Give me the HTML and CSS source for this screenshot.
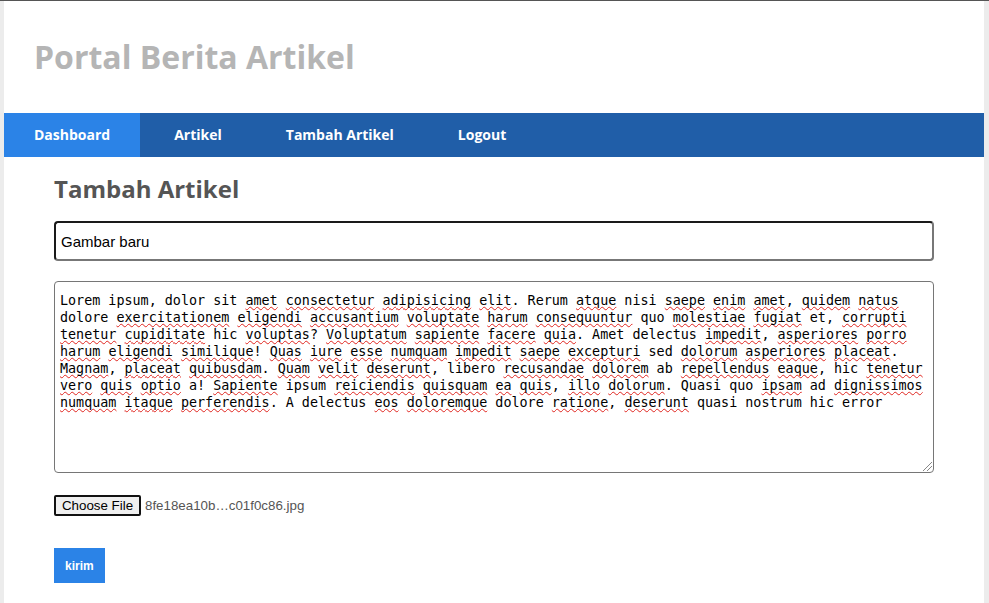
FILE: index.html
```html
<!DOCTYPE html>
<html lang="id">
<head>
<meta charset="utf-8">
<title>Portal Berita Artikel</title>
<link rel="stylesheet" href="styles.css">
</head>
<body>
<div class="container">
  <header class="site-header">
    <h1 class="site-title">Portal Berita Artikel</h1>
  </header>
  <nav class="main-nav">
    <a class="nav-item active" href="#">Dashboard</a>
    <a class="nav-item" href="#">Artikel</a>
    <a class="nav-item" href="#">Tambah Artikel</a>
    <a class="nav-item" href="#">Logout</a>
  </nav>
  <main class="content">
    <h2 class="page-title">Tambah Artikel</h2>
    <form class="article-form">
      <input class="field-title" type="text" value="Gambar baru">
      <div class="field-body" role="textbox" aria-multiline="true">Lorem ipsum, dolor sit <span class="sp">amet</span> <span class="sp">consectetur</span> <span class="sp">adipisicing</span> <span class="sp">elit</span>. Rerum <span class="sp">atque</span> nisi <span class="sp">saepe</span> <span class="sp">enim</span> <span class="sp">amet</span>, <span class="sp">quidem</span> <span class="sp">natus</span><br>dolore <span class="sp">exercitationem</span> <span class="sp">eligendi</span> <span class="sp">accusantium</span> <span class="sp">voluptate</span> <span class="sp">harum</span> <span class="sp">consequuntur</span> quo <span class="sp">molestiae</span> <span class="sp">fugiat</span> et, <span class="sp">corrupti</span><br><span class="sp">tenetur</span> <span class="sp">cupiditate</span> hic <span class="sp">voluptas</span>? <span class="sp">Voluptatum</span> <span class="sp">sapiente</span> <span class="sp">facere</span> <span class="sp">quia</span>. Amet delectus <span class="sp">impedit</span>, <span class="sp">asperiores</span> <span class="sp">porro</span><br><span class="sp">harum</span> <span class="sp">eligendi</span> <span class="sp">similique</span>! <span class="sp">Quas</span> <span class="sp">iure</span> <span class="sp">esse</span> <span class="sp">numquam</span> <span class="sp">impedit</span> <span class="sp">saepe</span> <span class="sp">excepturi</span> sed <span class="sp">dolorum</span> <span class="sp">asperiores</span> <span class="sp">placeat</span>.<br><span class="sp">Magnam</span>, <span class="sp">placeat</span> <span class="sp">quibusdam</span>. <span class="sp">Quam</span> <span class="sp">velit</span> <span class="sp">deserunt</span>, libero <span class="sp">recusandae</span> <span class="sp">dolorem</span> ab <span class="sp">repellendus</span> <span class="sp">eaque</span>, hic <span class="sp">tenetur</span><br><span class="sp">vero</span> <span class="sp">quis</span> <span class="sp">optio</span> a! <span class="sp">Sapiente</span> ipsum <span class="sp">reiciendis</span> <span class="sp">quisquam</span> <span class="sp">ea</span> <span class="sp">quis</span>, <span class="sp">illo</span> <span class="sp">dolorum</span>. Quasi quo <span class="sp">ipsam</span> ad <span class="sp">dignissimos</span><br><span class="sp">numquam</span> <span class="sp">itaque</span> <span class="sp">perferendis</span>. A delectus <span class="sp">eos</span> <span class="sp">doloremque</span> dolore <span class="sp">ratione</span>, <span class="sp">deserunt</span> quasi nostrum hic error<span class="grip"></span></div>
      <div class="file-row">
        <span class="file-btn">Choose File</span>
        <span class="file-name">8fe18ea10b…c01f0c86.jpg</span>
      </div>
      <div class="submit-row">
        <button class="btn-submit" type="button">kirim</button>
      </div>
    </form>
  </main>
</div>
</body>
</html>
```

FILE: styles.css
```css
html, body {
  margin: 0;
  padding: 0;
}
body {
  background: #ececec;
  border-top: 1px solid #555;
  font-family: "Open Sans", sans-serif;
  min-height: 602px;
}
.container {
  width: 980px;
  margin: 0 auto 0 4px;
  background: #fff;
  min-height: 602px;
}
.site-header {
  height: 112px;
  display: flex;
  align-items: center;
  padding: 0 30px;
  box-sizing: border-box;
}
.site-title {
  margin: 0;
  font-size: 32px;
  font-weight: 700;
  color: #b5b5b5;
  line-height: 1;
}
.main-nav {
  display: flex;
  gap: 4px;
  background: #205ea8;
  height: 44px;
}
.nav-item {
  display: flex;
  align-items: center;
  padding: 0 30px 2px;
  color: #fff;
  font-weight: 700;
  font-size: 14px;
  text-decoration: none;
}
.nav-item.active {
  background: #2b83e7;
}
.content {
  padding: 0 50px 20px;
}
.page-title {
  margin: 0;
  padding-top: 16px;
  font-size: 24px;
  line-height: 32px;
  color: #555;
  font-weight: 700;
}
.article-form {
  display: flex;
  flex-direction: column;
  padding-top: 16px;
}
.field-title {
  box-sizing: border-box;
  width: 880px;
  height: 40px;
  margin: 0;
  border: 2px solid #1a1a1a;
  border-right-color: #777;
  border-bottom-color: #777;
  border-radius: 4px;
  padding: 0 5px;
  font-family: "Liberation Sans", Arial, sans-serif;
  font-size: 15px;
  color: #000;
  outline: none;
}
.field-body {
  position: relative;
  box-sizing: border-box;
  width: 880px;
  height: 192px;
  margin-top: 20px;
  border: 1px solid #767676;
  border-radius: 4px;
  padding: 10px 5px;
  font-family: "DejaVu Sans Mono", "Liberation Mono", monospace;
  font-size: 13.4px;
  line-height: 17px;
  color: #000;
  white-space: nowrap;
  overflow: hidden;
}
.sp {
  text-decoration: underline wavy #e0251f;
  text-decoration-thickness: 1px;
  text-underline-offset: 1px;
  text-decoration-skip-ink: none;
}
.grip {
  position: absolute;
  right: 1px;
  bottom: 1px;
  width: 9px;
  height: 9px;
  background: linear-gradient(135deg, transparent 45%, #888 45%, #888 52%, transparent 52%, transparent 68%, #888 68%, #888 75%, transparent 75%);
}
.file-row {
  display: flex;
  align-items: center;
  margin-top: 22px;
  height: 21px;
  font-family: "Liberation Sans", Arial, sans-serif;
  font-size: 13.33px;
}
.file-btn {
  box-sizing: border-box;
  height: 21px;
  width: 87px;
  display: flex;
  align-items: center;
  justify-content: center;
  background: #efefef;
  border: 2px solid #111;
  border-radius: 2px;
  color: #000;
}
.file-name {
  margin-left: 4px;
  color: #555;
}
.submit-row {
  margin-top: 32px;
}
.btn-submit {
  height: 35px;
  padding: 0 11px;
  border: none;
  background: #2b83e7;
  color: #fff;
  font-family: "Liberation Sans", Arial, sans-serif;
  font-weight: 700;
  font-size: 12px;
}
```
